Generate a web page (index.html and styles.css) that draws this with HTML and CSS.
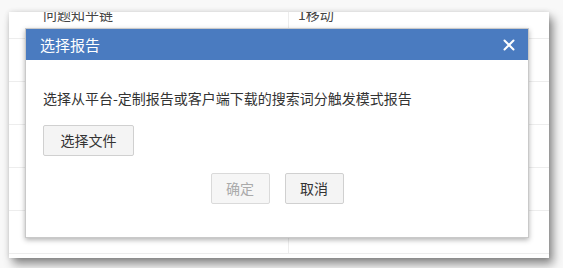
FILE: index.html
```html
<!DOCTYPE html>
<html lang="zh-CN">
<head>
<meta charset="utf-8">
<title>选择报告</title>
<link rel="stylesheet" href="styles.css">
</head>
<body>
<div class="panel">
  <div class="table">
    <div class="row first"><div class="cell c1">问题知乎链</div><div class="cell c2">1移动</div></div>
    <div class="row"><div class="cell c1"></div><div class="cell c2"></div></div>
    <div class="row"><div class="cell c1"></div><div class="cell c2"></div></div>
    <div class="row"><div class="cell c1"></div><div class="cell c2"></div></div>
    <div class="row"><div class="cell c1"></div><div class="cell c2"></div></div>
    <div class="row"><div class="cell c1"></div><div class="cell c2"></div></div>
  </div>
  <div class="modal">
    <div class="modal-header">
      <span class="modal-title">选择报告</span>
      <svg class="close" width="12" height="12" viewBox="0 0 12 12"><path d="M1.5 1.5 L10.5 10.5 M10.5 1.5 L1.5 10.5" stroke="#fff" stroke-width="2" stroke-linecap="round"/></svg>
    </div>
    <div class="modal-body">
      <p class="desc">选择从平台-定制报告或客户端下载的搜索词分触发模式报告</p>
      <button class="btn file-btn">选择文件</button>
    </div>
    <div class="modal-footer">
      <button class="btn disabled">确定</button>
      <button class="btn">取消</button>
    </div>
  </div>
</div>
</body>
</html>
```
FILE: styles.css
```css
* { box-sizing: border-box; }
html, body { margin: 0; padding: 0; }
body {
  width: 563px;
  height: 268px;
  background: #f8f8f8;
  font-family: "Noto Sans CJK SC", "Noto Sans", sans-serif;
  overflow: hidden;
  padding: 12px 0 0 9px;
}
.panel {
  position: relative;
  width: 540px;
  height: 246px;
  background: #fff;
  overflow: hidden;
  box-shadow: 4px 6px 9px rgba(0,0,0,0.45), 0 0 5px rgba(0,0,0,0.12);
}
.table { margin-top: -16px; }
.row {
  display: flex;
  height: 43px;
  border-bottom: 1px solid #ededed;
}
.cell {
  font-size: 14px;
  color: #444;
  padding-top: 8px;
  line-height: 20px;
}
.c1 { width: 280px; padding-left: 34px; border-right: 1px solid #ededed; }
.c2 { flex: 1; padding-left: 9px; }
.modal {
  position: absolute;
  left: 16px;
  top: 16px;
  width: 504px;
  height: 210px;
  background: #fff;
  border: 1px solid #c9c9c9;
  box-shadow: 0 2px 5px rgba(0,0,0,0.3);
  display: flex;
  flex-direction: column;
}
.modal-header {
  height: 31px;
  background: #4a7bc0;
  display: flex;
  align-items: center;
  justify-content: space-between;
  padding: 0 13px 0 14px;
}
.modal-title {
  color: #fff;
  font-size: 15px;
  line-height: 20px;
}
.modal-body {
  padding: 28px 17px 0;
}
.desc {
  margin: 0;
  font-size: 14px;
  line-height: 20px;
  color: #333;
}
.btn {
  font-family: inherit;
  font-size: 14px;
  color: #333;
  background: #f4f4f4;
  border: 1px solid #d0d0d0;
  border-radius: 2px;
  height: 31px;
  padding: 0 14px;
  line-height: 29px;
}
.file-btn {
  margin-top: 17px;
  width: 91px;
  padding: 0;
}
.modal-footer {
  display: flex;
  justify-content: center;
  gap: 15px;
  margin-top: 17px;
}
.modal-footer .btn { width: 59px; padding: 0; }
.btn.disabled {
  color: #aaa;
  background: #f6f6f6;
  border-color: #dadada;
}
```
